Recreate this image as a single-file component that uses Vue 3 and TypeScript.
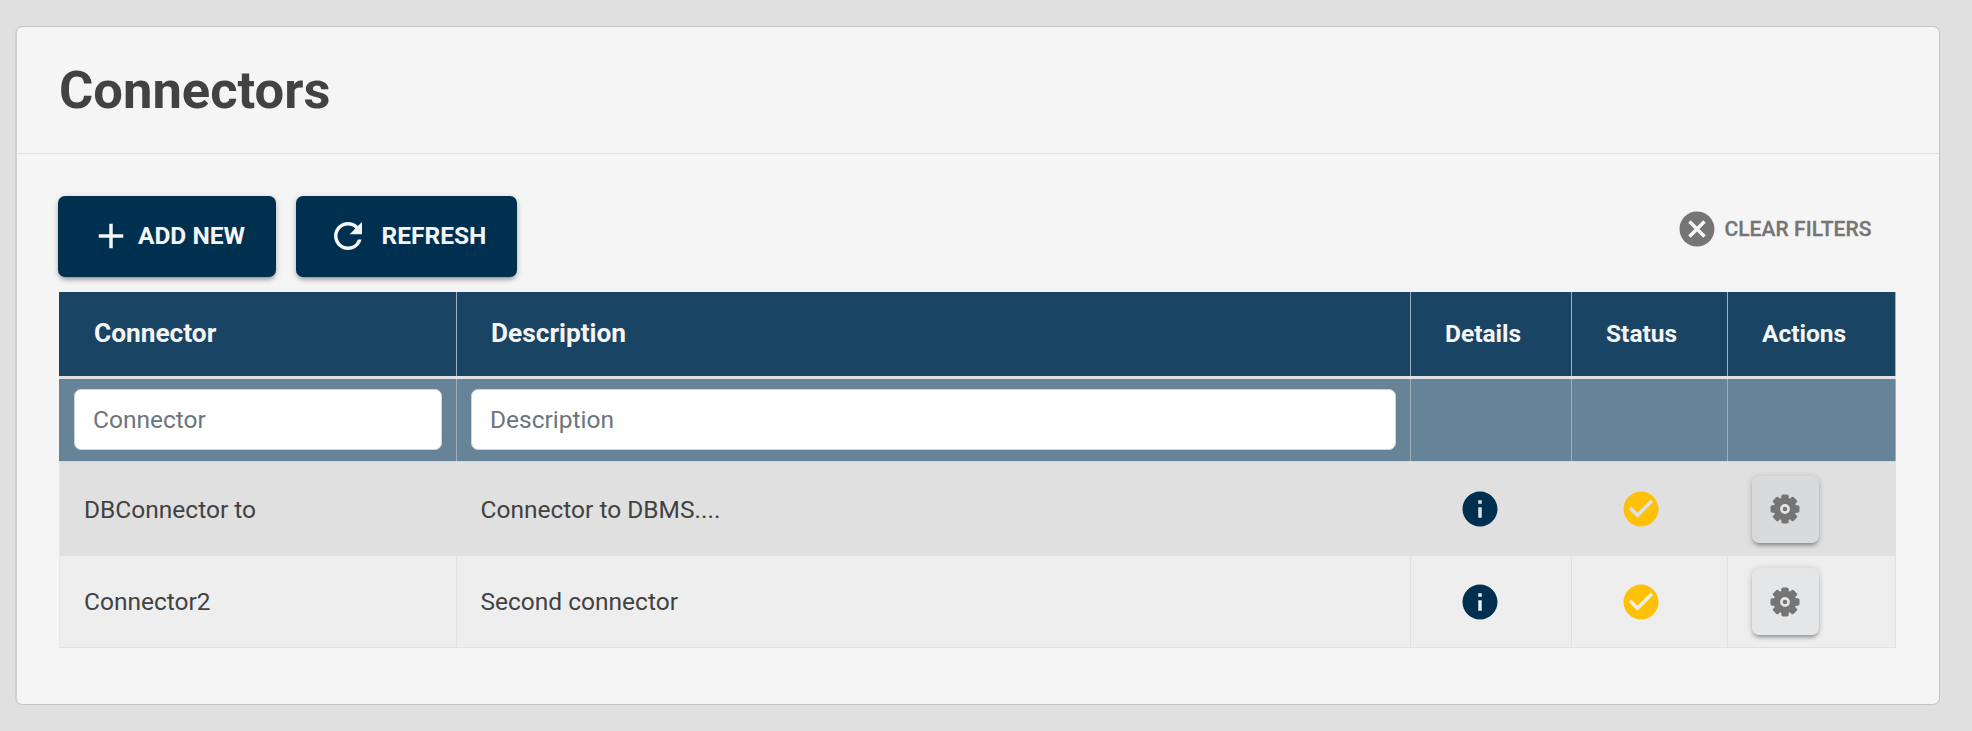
<script setup lang="ts">
import { ref } from 'vue'

interface Connector {
  name: string
  description: string
}

const nameFilter = ref('')
const descriptionFilter = ref('')
const connectors: Connector[] = [
  { name: 'DBConnector to', description: 'Connector to DBMS....' },
  { name: 'Connector2', description: 'Second connector' },
]
const teeth = [0, 45, 90, 135]

function clearFilters() {
  nameFilter.value = ''
  descriptionFilter.value = ''
}
</script>

<template>
  <main class="page">
    <section class="card">
      <header class="card-header">
        <h1>Connectors</h1>
      </header>
      <div class="card-body">
        <div class="toolbar">
          <button class="btn add" type="button">
            <svg class="icon" viewBox="0 0 24 24"><path d="M19 13h-6v6h-2v-6H5v-2h6V5h2v6h6v2z" /></svg>
            <span>ADD NEW</span>
          </button>
          <button class="btn refresh" type="button">
            <svg class="icon" viewBox="0 0 24 24"><path d="M17.65 6.35A7.958 7.958 0 0 0 12 4c-4.42 0-7.99 3.58-7.99 8s3.57 8 7.99 8c3.73 0 6.84-2.55 7.73-6h-2.08A5.99 5.99 0 0 1 12 18c-3.31 0-6-2.69-6-6s2.69-6 6-6c1.66 0 3.14.69 4.22 1.78L13 11h7V4l-2.35 2.35z" /></svg>
            <span>REFRESH</span>
          </button>
          <button class="clear" type="button" @click="clearFilters">
            <svg class="icon" viewBox="0 0 24 24"><path d="M12 2C6.47 2 2 6.47 2 12s4.47 10 10 10 10-4.47 10-10S17.53 2 12 2zm5 13.59L15.59 17 12 13.41 8.41 17 7 15.59 10.59 12 7 8.41 8.41 7 12 10.59 15.59 7 17 8.41 13.41 12 17 15.59z" /></svg>
            <span>CLEAR FILTERS</span>
          </button>
        </div>
        <div class="table">
          <div class="row head">
            <div class="sortable">Connector</div>
            <div class="sortable">Description</div>
            <div>Details</div>
            <div>Status</div>
            <div>Actions</div>
          </div>
          <div class="row filters">
            <div><input v-model="nameFilter" placeholder="Connector" /></div>
            <div><input v-model="descriptionFilter" placeholder="Description" /></div>
            <div></div>
            <div></div>
            <div></div>
          </div>
          <div v-for="c in connectors" :key="c.name" class="row data">
            <div>{{ c.name }}</div>
            <div>{{ c.description }}</div>
            <div class="center">
              <svg class="icon info" viewBox="0 0 24 24"><path d="M12 2C6.48 2 2 6.48 2 12s4.48 10 10 10 10-4.48 10-10S17.52 2 12 2zm1 15h-2v-6h2v6zm0-8h-2V7h2v2z" /></svg>
            </div>
            <div class="center state">
              <svg class="icon status" viewBox="0 0 24 24"><path d="M12 2C6.48 2 2 6.48 2 12s4.48 10 10 10 10-4.48 10-10S17.52 2 12 2zm-2 15l-5-5 1.41-1.41L10 14.17l7.59-7.59L19 8l-9 9z" /></svg>
            </div>
            <div>
              <button class="action" type="button">
                <svg class="gear" viewBox="-15 -15 30 30">
                  <rect v-for="a in teeth" :key="a" x="-3.7" y="-14.5" width="7.4" height="29" rx="1.7" :transform="`rotate(${a})`" />
                  <circle r="11.4" />
                  <circle class="ring" r="3.6" />
                </svg>
              </button>
            </div>
          </div>
        </div>
      </div>
    </section>
  </main>
</template>

<style>
body {
  margin: 0;
  background: #e0e0e0;
}
</style>

<style scoped>
.page {
  box-sizing: border-box;
  height: 731px;
  padding: 26px 32.5px 26px 15px;
  background: #e0e0e0;
  font-family: Roboto, sans-serif;
  font-size: 24.5px;
  color: #424242;
}
.card {
  box-sizing: border-box;
  height: 679px;
  border: 1px solid #c4c4c4;
  border-left: 2px solid #d0d0d0;
  border-radius: 7px;
  background: #f5f5f5;
}
.card-header {
  box-sizing: border-box;
  height: 127px;
  padding: 32px 42px 0;
  border-bottom: 1px solid #dfdfdf;
}
h1 {
  margin: 0;
  font-size: 52.5px;
  line-height: 62px;
  font-weight: 700;
}
.card-body {
  padding: 42px 42px 0 42px;
}
.toolbar {
  display: flex;
  height: 96px;
  margin-left: -0.6px;
}
button {
  border: 0;
  font-family: inherit;
}
.icon {
  display: block;
  flex: none;
  width: 42px;
  height: 42px;
  fill: currentColor;
}
.btn {
  display: flex;
  align-items: center;
  box-sizing: border-box;
  height: 81px;
  padding: 0 0 1px;
  border-radius: 7px;
  background: #00304f;
  color: #f5f5f5;
  font-size: 24.5px;
  font-weight: 700;
  white-space: nowrap;
  box-shadow: 0 4px 5px -3px rgba(0, 0, 0, 0.35), 0 2px 6px rgba(0, 0, 0, 0.24);
}
.btn span {
  padding-bottom: 2px;
  letter-spacing: 0.03px;
}
.add {
  width: 218px;
  margin-right: 20px;
  padding-left: 31.5px;
}
.add span {
  margin-left: 6px;
}
.refresh {
  width: 221px;
  padding-left: 31px;
}
.refresh span {
  margin-left: 12px;
}
.clear {
  display: flex;
  align-items: center;
  height: 42px;
  margin: 12px 25px 0 auto;
  padding: 0;
  background: none;
  color: #757575;
  font-size: 21px;
  font-weight: 500;
  letter-spacing: 0.07px;
  white-space: nowrap;
  -webkit-text-stroke: 0.3px #757575;
}
.clear span {
  margin-left: 6px;
}
.row {
  display: grid;
  grid-template-columns: 397.5px 954px 161px 156px 168.5px;
  box-sizing: border-box;
  width: 1837px;
}
.row > div {
  display: flex;
  align-items: center;
  box-sizing: border-box;
  min-width: 0;
  border-right: 1px solid #dee2e6;
}
.head {
  height: 84px;
  background: #1a4463;
  color: #f5f5f5;
  font-weight: 700;
}
.head > div {
  padding: 0 0 2px 34.5px;
}
.head > .sortable {
  padding-bottom: 3px;
  font-size: 26.25px;
}
.filters {
  height: 86px;
  border-top: 3px solid #dee0e2;
  border-bottom: 1px solid #d2d8dc;
  background: #678398;
}
.head > div,
.filters > div {
  border-color: #9fb0bc;
}
.filters > div {
  padding: 0 14px 2px;
}
.filters > div:first-child {
  padding-left: 14.5px;
}
.head > .sortable:first-child {
  padding-left: 35px;
}
input {
  box-sizing: border-box;
  width: 100%;
  height: 61px;
  padding: 0 19px 0 18.5px;
  border: 1px solid #ced4da;
  border-radius: 7px;
  background: #fff;
  color: #495057;
  font: inherit;
}
input::placeholder {
  color: #6c757d;
  opacity: 1;
}
.data {
  height: 92px;
  border-bottom: 1px solid #dee2e6;
  border-left: 1px solid #e4e6e8;
  background: #eeeeee;
  grid-template-columns: 396.5px 954px 161px 156px 168.5px;
}
.data > div {
  padding-left: 24px;
}
.data:nth-child(3) {
  height: 94px;
  background: #e0e0e0;
}
.data:nth-child(3) > div {
  padding-top: 1px;
}
.data > .center {
  justify-content: center;
  padding-left: 0;
  padding-right: 21px;
}
.data > .state {
  padding-right: 16px;
}
.info {
  color: #00304f;
}
.status {
  color: #ffc107;
}
.action {
  display: flex;
  align-items: center;
  justify-content: center;
  width: 67px;
  height: 67px;
  padding: 0;
  border-radius: 7px;
  background: #e5e6e8;
  box-shadow: 0 4px 4px -2px rgba(0, 0, 0, 0.32), 0 1px 6px rgba(0, 0, 0, 0.2);
}
.data:nth-child(3) .action {
  background: #d9dadc;
}
.gear {
  width: 30px;
  height: 30px;
  fill: #757575;
}
.ring {
  stroke: #e5e6e8;
  stroke-width: 2.6;
}
</style>
